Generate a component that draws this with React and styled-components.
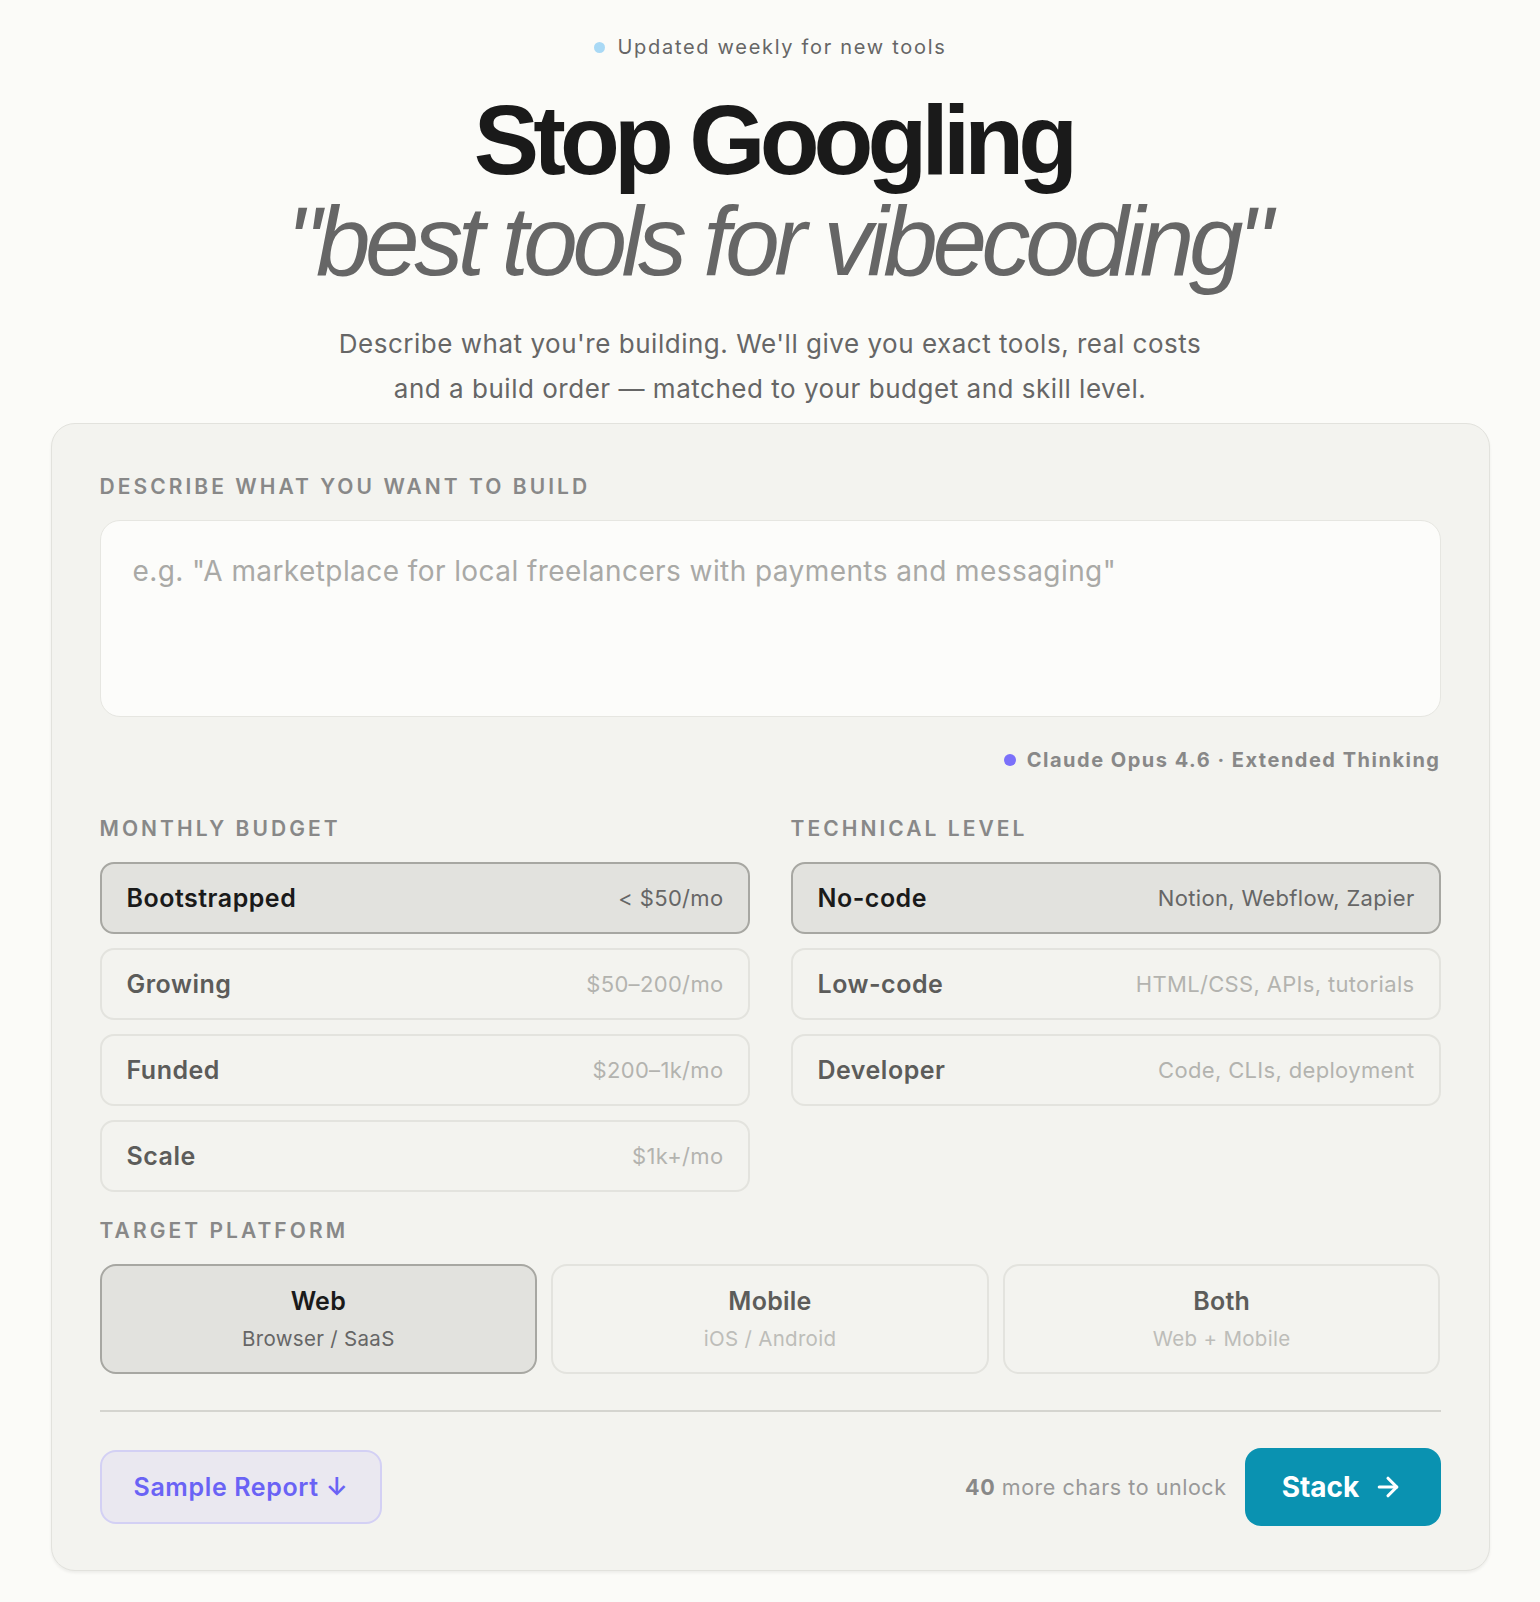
import React, { useState } from "react";
import styled, { createGlobalStyle } from "styled-components";
import { ArrowRight } from "lucide-react";

const GlobalStyle = createGlobalStyle`
  html, body { margin: 0; padding: 0; background: #fbfbf8; }
  body { font-family: Inter, "Noto Sans", sans-serif; color: #1a1a1a; }
  * { box-sizing: border-box; }
`;

const Page = styled.div`
  display: flex;
  flex-direction: column;
  align-items: center;
  padding: 35px 0 30px;
`;

const Badge = styled.div`
  display: flex;
  align-items: center;
  gap: 13px;
  font-size: 20px;
  line-height: 24px;
  letter-spacing: 0.085em;
  color: #666;
`;

const Dot = styled.span`
  width: ${(p) => p.$size || 11}px;
  height: ${(p) => p.$size || 11}px;
  border-radius: 50%;
  background: ${(p) => p.$color};
  flex: none;
`;

const Title = styled.h1`
  margin: 31px 0 0;
  padding-left: 6px;
  font-family: "Liberation Sans", Arial, sans-serif;
  font-size: 98px;
  line-height: 101px;
  font-weight: 700;
  letter-spacing: -0.06em;
  text-align: center;
  color: #1a1a1a;
`;

const TitleItalic = styled.span`
  display: block;
  padding-left: 8px;
  font-style: italic;
  font-weight: 400;
  color: #666;
  letter-spacing: -0.055em;
`;

const Subtitle = styled.p`
  margin: 29px 0 0;
  font-size: 26px;
  line-height: 45px;
  letter-spacing: 0.02em;
  text-align: center;
  color: #666;
`;

const Card = styled.div`
  margin-top: 12px;
  width: 1439px;
  background: #f3f3ef;
  border: 1.5px solid #e2e2dd;
  border-radius: 24px;
  padding: 50px 48px 44px;
  box-shadow: 0 2px 3px rgba(0, 0, 0, 0.06);
  display: flex;
  flex-direction: column;
`;

const Label = styled.div`
  font-size: 21px;
  line-height: 26px;
  font-weight: 600;
  letter-spacing: 0.145em;
  text-transform: uppercase;
  color: #888;
  margin-bottom: 20px;
`;

const TextArea = styled.textarea`
  display: block;
  width: 100%;
  height: 197px;
  resize: none;
  background: #fcfcfa;
  border: 1.5px solid #e6e6e1;
  border-radius: 20px;
  padding: 30px 32px;
  font-family: Inter, "Noto Sans", sans-serif;
  font-size: 28px;
  line-height: 40px;
  letter-spacing: 0.015em;
  color: #1a1a1a;
  outline: none;
  &::placeholder { color: #a9a9a6; }
`;

const ModelLine = styled.div`
  margin-top: 31px;
  align-self: flex-end;
  display: flex;
  align-items: center;
  gap: 11px;
  font-size: 20px;
  line-height: 24px;
  font-weight: 700;
  letter-spacing: 0.075em;
  color: #888;
`;

const Columns = styled.div`
  margin-top: 44px;
  display: grid;
  grid-template-columns: 1fr 1fr;
  column-gap: 41px;
  align-items: start;
`;

const Column = styled.div`
  display: flex;
  flex-direction: column;
`;

const OptionList = styled.div`
  display: flex;
  flex-direction: column;
  gap: 14px;
`;

const OptionRow = styled.button`
  display: flex;
  align-items: center;
  justify-content: space-between;
  height: 72px;
  padding: 0 24px 0 25px;
  border-radius: 14px;
  border: 2px solid ${(p) => (p.$active ? "#a7a7a2" : "#e3e3de")};
  background: ${(p) => (p.$active ? "#e2e2de" : "transparent")};
  font-family: Inter, "Noto Sans", sans-serif;
  cursor: pointer;
  text-align: left;
`;

const OptionName = styled.span`
  font-size: 25px;
  font-weight: 600;
  letter-spacing: 0.02em;
  color: ${(p) => (p.$active ? "#1a1a1a" : "#5c5c5a")};
`;

const OptionHint = styled.span`
  font-size: 22px;
  letter-spacing: 0.015em;
  color: ${(p) => (p.$active ? "#666" : "#b3b3af")};
`;

const Section = styled.div`
  margin-top: 26px;
`;

const PlatformGrid = styled.div`
  display: grid;
  grid-template-columns: repeat(3, 1fr);
  gap: 14px;
`;

const PlatformCard = styled.button`
  height: 110px;
  border-radius: 16px;
  border: 2px solid ${(p) => (p.$active ? "#a7a7a2" : "#e3e3de")};
  background: ${(p) => (p.$active ? "#e2e2de" : "transparent")};
  display: flex;
  flex-direction: column;
  align-items: center;
  justify-content: center;
  gap: 10px;
  font-family: Inter, "Noto Sans", sans-serif;
  cursor: pointer;
`;

const PlatformName = styled.span`
  font-size: 25px;
  line-height: 30px;
  font-weight: 600;
  letter-spacing: 0.01em;
  color: ${(p) => (p.$active ? "#1a1a1a" : "#5c5c5a")};
`;

const PlatformSub = styled.span`
  font-size: 20.5px;
  line-height: 26px;
  letter-spacing: 0.015em;
  color: ${(p) => (p.$active ? "#666" : "#bdbdb9")};
`;

const Divider = styled.hr`
  margin: 36px 0 0;
  border: none;
  height: 2px;
  background: #d4d4cf;
`;

const Footer = styled.div`
  margin-top: 36px;
  display: flex;
  align-items: center;
  justify-content: space-between;
`;

const SampleButton = styled.button`
  height: 74px;
  padding: 0 32px;
  border-radius: 16px;
  border: 2px solid #d3d0f4;
  background: #eae8f0;
  color: #6a63f5;
  font-family: Inter, "Noto Sans", sans-serif;
  font-size: 25px;
  font-weight: 600;
  letter-spacing: 0.025em;
  cursor: pointer;
`;

const FooterRight = styled.div`
  display: flex;
  align-items: center;
  gap: 18px;
`;

const Unlock = styled.span`
  font-size: 21.5px;
  color: #999;
  letter-spacing: 0.025em;
  b { color: #888; font-weight: 700; }
`;

const StackButton = styled.button`
  height: 78px;
  width: 196px;
  border: none;
  border-radius: 16px;
  background: #0a92b1;
  color: #fff;
  display: flex;
  align-items: center;
  justify-content: center;
  gap: 14px;
  font-family: Inter, "Noto Sans", sans-serif;
  font-size: 28px;
  font-weight: 700;
  cursor: pointer;
`;

const budgets = [
  ["Bootstrapped", "< $50/mo"],
  ["Growing", "$50–200/mo"],
  ["Funded", "$200–1k/mo"],
  ["Scale", "$1k+/mo"],
];

const levels = [
  ["No-code", "Notion, Webflow, Zapier"],
  ["Low-code", "HTML/CSS, APIs, tutorials"],
  ["Developer", "Code, CLIs, deployment"],
];

const platforms = [
  ["Web", "Browser / SaaS"],
  ["Mobile", "iOS / Android"],
  ["Both", "Web + Mobile"],
];

export default function App() {
  const [budget, setBudget] = useState(0);
  const [level, setLevel] = useState(0);
  const [platform, setPlatform] = useState(0);

  return (
    <>
      <GlobalStyle />
      <Page>
        <Badge>
          <Dot $color="#a9d9f5" $size={11} />
          Updated weekly for new tools
        </Badge>
        <Title>
          Stop Googling
          <TitleItalic>"best tools for vibecoding"</TitleItalic>
        </Title>
        <Subtitle>
          Describe what you're building. We'll give you exact tools, real costs
          <br />
          and a build order — matched to your budget and skill level.
        </Subtitle>

        <Card>
          <Label>Describe what you want to build</Label>
          <TextArea placeholder={'e.g. "A marketplace for local freelancers with payments and messaging"'} />
          <ModelLine>
            <Dot $color="#7b70fa" $size={12} />
            Claude Opus 4.6 · Extended Thinking
          </ModelLine>

          <Columns>
            <Column>
              <Label>Monthly budget</Label>
              <OptionList>
                {budgets.map(([name, hint], i) => (
                  <OptionRow key={name} $active={budget === i} onClick={() => setBudget(i)}>
                    <OptionName $active={budget === i}>{name}</OptionName>
                    <OptionHint $active={budget === i}>{hint}</OptionHint>
                  </OptionRow>
                ))}
              </OptionList>
            </Column>
            <Column>
              <Label>Technical level</Label>
              <OptionList>
                {levels.map(([name, hint], i) => (
                  <OptionRow key={name} $active={level === i} onClick={() => setLevel(i)}>
                    <OptionName $active={level === i}>{name}</OptionName>
                    <OptionHint $active={level === i}>{hint}</OptionHint>
                  </OptionRow>
                ))}
              </OptionList>
            </Column>
          </Columns>

          <Section>
            <Label>Target platform</Label>
            <PlatformGrid>
              {platforms.map(([name, sub], i) => (
                <PlatformCard key={name} $active={platform === i} onClick={() => setPlatform(i)}>
                  <PlatformName $active={platform === i}>{name}</PlatformName>
                  <PlatformSub $active={platform === i}>{sub}</PlatformSub>
                </PlatformCard>
              ))}
            </PlatformGrid>
          </Section>

          <Divider />

          <Footer>
            <SampleButton>Sample Report ↓</SampleButton>
            <FooterRight>
              <Unlock>
                <b>40</b> more chars to unlock
              </Unlock>
              <StackButton>
                Stack
                <ArrowRight size={30} strokeWidth={2.5} />
              </StackButton>
            </FooterRight>
          </Footer>
        </Card>
      </Page>
    </>
  );
}
